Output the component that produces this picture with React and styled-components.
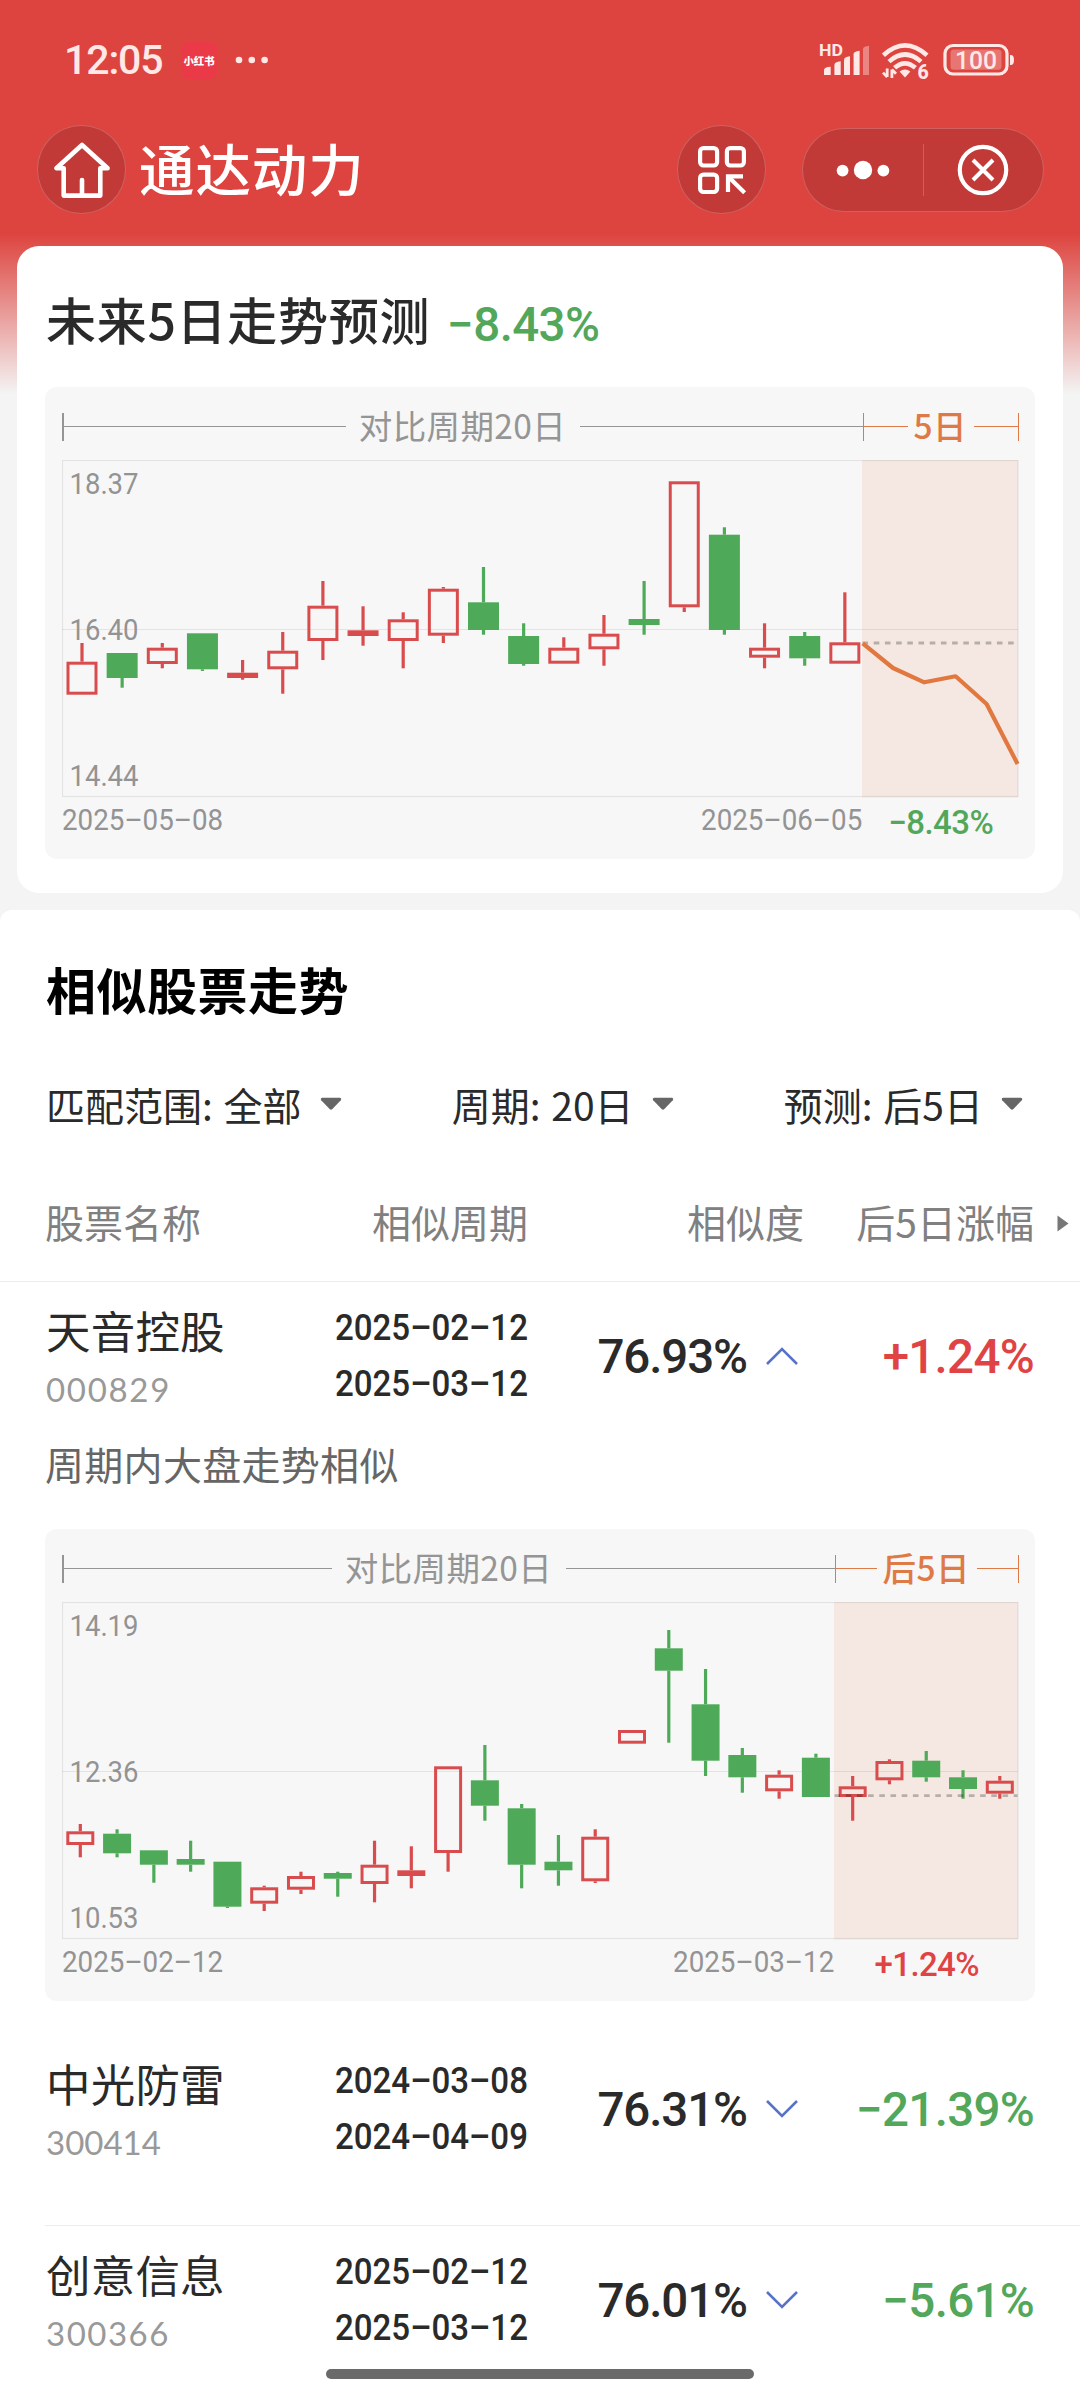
import React from 'react';
import styled, { createGlobalStyle } from 'styled-components';

const CJK = "'Noto Sans CJK SC', sans-serif";
const NUM = "Roboto, 'Noto Sans CJK SC', sans-serif";

const RED = '#e04344';
const GREEN = '#4eaa58';
const GREEN_TEXT = '#52a75b';
const ORANGE = '#de7a45';

const Global = createGlobalStyle`
  * { box-sizing: border-box; }
  html, body { margin: 0; padding: 0; }
  body { font-family: ${CJK}; background: #f4f4f4; color: #2a2a2a; }
`;

const Page = styled.div`
  position: relative;
  width: 1080px;
  height: 2400px;
  overflow: hidden;
  display: flex;
  flex-direction: column;
  background: linear-gradient(to bottom, #dd443f 0, #dd443f 234px, #f4f4f4 394px);
  & > * { flex-shrink: 0; }
`;

/* ---------- status bar ---------- */

const StatusBar = styled.header`
  height: 120px;
  padding: 0 65px 0 64px;
  display: flex;
  align-items: center;
  justify-content: space-between;
  color: #ffe8e6;
`;

const StatusGroup = styled.div`
  display: flex;
  align-items: center;
`;

const Clock = styled.span`
  font: 500 41px/60px ${NUM};
  width: 117px;
  letter-spacing: -1.1px;
`;

const AppBadge = styled.span`
  width: 36px;
  height: 37px;
  border-radius: 8px;
  background: #ea3a48;
  color: #fff;
  display: flex;
  align-items: center;
  justify-content: center;
  font: 900 10.4px/37px ${CJK};
  margin-right: 18px;
`;

/* ---------- navigation ---------- */

const NavBar = styled.nav`
  height: 99px;
  padding: 0 36px 0 37px;
  display: flex;
  align-items: center;
`;

const RoundButton = styled.button`
  width: 89px;
  height: 89px;
  padding: 0;
  border-radius: 50%;
  border: 1.5px solid rgba(255, 255, 255, 0.2);
  background: #c23a37;
  display: flex;
  align-items: center;
  justify-content: center;
`;

const NavTitle = styled.h1`
  flex: 1;
  margin: -6px 0 0 13px;
  font: 500 55.5px/80px ${CJK};
  letter-spacing: 0.9px;
  color: #fff;
`;

const Capsule = styled.div`
  width: 242px;
  height: 84px;
  margin-left: 36px;
  border-radius: 42px;
  border: 1.5px solid rgba(255, 255, 255, 0.2);
  background: #c23a37;
  display: flex;
  align-items: center;
`;

const CapsuleHalf = styled.div`
  flex: 1;
  height: 52px;
  display: flex;
  align-items: center;
  justify-content: center;
  & + & { border-left: 1.5px solid rgba(255, 255, 255, 0.2); }
`;

/* ---------- cards ---------- */

const ForecastCard = styled.section`
  margin: 27px 17px 0;
  height: 647px;
  padding: 38px 28px 0;
  border-radius: 22px;
  background: #fff;
`;

const CardHeading = styled.div`
  height: 68px;
  margin-bottom: 35px;
  display: flex;
  align-items: center;
  padding-left: 1px;
`;

const CardTitle = styled.h2`
  margin: 0;
  font: 500 50px/68px ${CJK};
  letter-spacing: 0.7px;
`;

const HeadlineChange = styled.span`
  font: 500 47.5px/60px ${NUM};
  letter-spacing: -0.6px;
  color: ${GREEN_TEXT};
  margin: 14px 0 0 17px;
`;

const MatchSection = styled.section`
  height: 1490px;
  margin-top: 17px;
  padding-top: 38px;
  border-radius: 12px 12px 0 0;
  background: #fff;
  overflow: hidden;
`;

const SectionTitle = styled.h2`
  margin: 0 0 0 46px;
  font: 700 50px/80px ${CJK};
  letter-spacing: 0.5px;
  color: #000;
`;

const FilterBar = styled.div`
  height: 152px;
  padding: 0 57px 0 46px;
  display: flex;
  align-items: center;
  justify-content: space-between;
`;

const Filter = styled.div`
  display: flex;
  align-items: center;
  font: 400 39px/56px ${CJK};
  white-space: pre;
  word-spacing: 2px;
  svg { margin-left: 18px; }
`;

/* ---------- table ---------- */

const columns = '255px 228px 276px 230px 1fr';

const TableHead = styled.div`
  height: 102px;
  padding: 0 0 19px 45px;
  border-bottom: 1px solid #ececec;
  display: grid;
  grid-template-columns: ${columns};
  align-items: center;
  font: 400 39px/56px ${CJK};
  color: #808080;
  text-align: right;
  & > :first-child { text-align: left; }
  svg { display: block; margin: 5px 0 0 23px; }
`;

const Entry = styled.article`
  margin-left: 45px;
  padding-bottom: ${(p) => (p.$open ? 34 : 42)}px;
  border-bottom: ${(p) => (p.$open ? 'none' : '1px solid #ececec')};
`;

const EntryRow = styled.div`
  height: 148px;
  display: grid;
  grid-template-columns: ${columns};
`;

const NameCell = styled.div`
  padding-top: 18px;
`;

const StockName = styled.div`
  font: 400 44.5px/60px ${CJK};
  padding-left: 1px;
  letter-spacing: 0.2px;
`;

const StockCode = styled.div`
  font: 400 33px/58px Lato, sans-serif;
  letter-spacing: ${(p) => p.$tracking}px;
  padding-left: 1px;
  color: #999;
`;

const PeriodCell = styled.div`
  padding-top: 18px;
  text-align: right;
`;

const PeriodDate = styled.div`
  font: 500 37px/56px ${NUM};
  white-space: nowrap;
  transform: scaleX(0.895);
  transform-origin: right center;
`;

const ScoreCell = styled.div`
  display: flex;
  align-items: center;
  justify-content: flex-end;
  padding-top: 2px;
  font: 500 47.5px/60px ${NUM};
  letter-spacing: -1.1px;
  svg { margin: 0 5px 0 18px; }
`;

const ChangeCell = styled.div`
  display: flex;
  align-items: center;
  justify-content: flex-end;
  padding-top: 2px;
  font: 500 47.5px/60px ${NUM};
  letter-spacing: -0.7px;
  color: ${(p) => (p.$up ? RED : GREEN_TEXT)};
`;

const Reason = styled.p`
  margin: 5px 0 38px;
  font: 400 39px/56px ${CJK};
  letter-spacing: 0.3px;
  color: #666;
`;

/* ---------- chart panel ---------- */

const Panel = styled.div`
  width: 990px;
  height: 472px;
  border-radius: 12px;
  background: #f7f7f7;
`;

const PanelHead = styled.div`
  height: 73px;
  padding: 6px 16px 0 17px;
  display: flex;
`;

const Span = styled.div`
  width: ${(p) => p.$width}px;
  display: flex;
  align-items: center;
  color: ${(p) => p.$color};
  font: ${(p) => p.$weight} 33.5px/48px ${CJK};
  letter-spacing: 0.4px;
`;

const Tick = styled.i`
  width: 1.5px;
  height: 28px;
  background: currentColor;
`;

const Rule = styled.i`
  flex: 1;
  height: 1.5px;
  background: currentColor;
`;

const SpanLabel = styled.span`
  padding: 0 ${(p) => p.$pad + 1}px 0 ${(p) => p.$pad}px;
  margin-top: -4px;
`;

const Plot = styled.svg`
  display: block;
  margin-left: 17px;
`;

const PanelFoot = styled.div`
  height: 44px;
  padding: 0 16px 0 17px;
  display: flex;
  align-items: center;
`;

const DateRange = styled.div`
  width: ${(p) => p.$width}px;
  display: flex;
  justify-content: space-between;
`;

const AxisDate = styled.span`
  font: 400 30px/40px ${NUM};
  color: #939393;
  white-space: nowrap;
  transform: scaleX(0.925);
  transform-origin: ${(p) => (p.$end ? 'right' : 'left')} center;
`;

const PanelChange = styled.span`
  flex: 1;
  padding-top: 6px;
  text-align: center;
  font: 500 33px/40px ${NUM};
  letter-spacing: -0.6px;
  color: ${(p) => (p.$up ? RED : GREEN_TEXT)};
`;

const HomeIndicator = styled.div`
  position: absolute;
  left: 326px;
  bottom: 21px;
  width: 428px;
  height: 10px;
  border-radius: 5px;
  background: #6a6a6a;
`;

/* ---------- data: [kind, high, bodyTop, bodyBottom, low] ---------- */

const forecastCandles = [
  ['r', 183, 201.7, 234.7, 234.7], ['g', 193, 193, 218, 227.7], ['r', 183, 187.7, 204, 208.3],
  ['g', 173.3, 173.3, 209.3, 211], ['r', 200, 212.7, 218, 219.7], ['r', 172, 190.7, 209.3, 233.7],
  ['r', 121, 145.7, 181, 200], ['r', 146.3, 170.3, 176, 185.7], ['r', 152.3, 159.3, 181, 208.3],
  ['r', 127, 128.7, 175.7, 183], ['g', 107, 142.3, 170, 174.7], ['g', 163.3, 176, 204, 205.7],
  ['r', 177.3, 187.7, 203.7, 203.7], ['r', 155, 173.7, 189.3, 205.7], ['g', 121, 159, 165, 174.7],
  ['r', 21.3, 21.3, 147.3, 152], ['g', 67.3, 74.7, 170, 174.7], ['r', 163.3, 187.7, 197.7, 208.3],
  ['g', 172, 176, 198.3, 205.7], ['r', 132.3, 182.3, 203.7, 203.7],
];

const matchCandles = [
  ['r', 222, 229.3, 243, 255.3], ['g', 227.3, 231.7, 251.3, 255.3], ['g', 248.3, 248.3, 262.7, 280.7],
  ['g', 238.7, 257, 262.7, 269.7], ['g', 259.7, 259.7, 304.7, 306], ['r', 283.7, 285.3, 301.7, 309],
  ['r', 269.7, 274, 287.7, 292], ['g', 269.7, 271, 276.7, 294.7], ['r', 238.7, 262.7, 282, 300.3],
  ['r', 244.3, 268.3, 274, 286.3], ['r', 164.3, 164.3, 251, 269.7], ['g', 143, 178.3, 203.7, 218.7],
  ['g', 202, 206.3, 262.7, 286.3], ['g', 233, 259.7, 268.3, 283.7], ['r', 227.3, 234.7, 279.3, 281],
  ['r', 128, 128, 141.7, 141.7], ['g', 28, 46.3, 68.7, 140.7], ['g', 67, 102.3, 158.7, 174],
  ['g', 146, 153, 175.3, 190.7], ['r', 168.3, 172.7, 189.3, 196.7], ['g', 151.7, 155.7, 195, 195],
  ['r', 174, 184.3, 195, 218.7], ['r', 157.3, 159, 178.3, 182.3], ['g', 149, 158.7, 175.3, 179.7],
  ['g', 168.3, 175.3, 187, 196.7], ['r', 174, 178.7, 191.7, 196.7],
];

const forecastChart = {
  split: 800.5, range: ['18.37', '16.40', '14.44'], dates: ['2025–05–08', '2025–06–05'],
  ahead: '5日', change: '−8.43%', up: false,
  candles: forecastCandles, first: 20, step: 40.15, body: 31, base: 183,
  line: '800.7,183.3 831,208 862.3,222.3 893.6,216.3 924.6,244 955.6,304',
};

const matchChart = {
  split: 772.5, range: ['14.19', '12.36', '10.53'], dates: ['2025–02–12', '2025–03–12'],
  ahead: '后5日', change: '+1.24%', up: true,
  candles: matchCandles, first: 18.3, step: 36.78, body: 28, base: 193.7,
};

const stocks = [
  { name: '天音控股', code: '000829', tracking: 1.7, from: '2025–02–12', to: '2025–03–12', score: '76.93%', change: '+1.24%', reason: '周期内大盘走势相似', chart: matchChart },
  { name: '中光防雷', code: '300414', tracking: 0, from: '2024–03–08', to: '2024–04–09', score: '76.31%', change: '−21.39%' },
  { name: '创意信息', code: '300366', tracking: 1.5, from: '2025–02–12', to: '2025–03–12', score: '76.01%', change: '−5.61%' },
];

/* ---------- pieces ---------- */

function Candle({ x, width, data }) {
  const [kind, high, top, bottom, low] = data;
  const hollow = kind === 'r' && bottom - top > 8;
  const color = kind === 'r' ? '#d94c4d' : GREEN;
  return (
    <g fill={color}>
      {high < top && <rect x={x - 1.6} y={high} width="3.2" height={top - high} />}
      {low > bottom && <rect x={x - 1.6} y={bottom} width="3.2" height={low - bottom} />}
      {hollow ? (
        <rect x={x - width / 2 + 1.5} y={top + 1.5} width={width - 3} height={bottom - top - 3} fill="none" stroke={color} strokeWidth="3" />
      ) : (
        <rect x={x - width / 2} y={top} width={width} height={bottom - top} />
      )}
    </g>
  );
}

function ChartPanel({ chart }) {
  const { split, range, dates, ahead, change, up, candles, first, step, body, base, line } = chart;
  return (
    <Panel>
      <PanelHead>
        <Span $width={split} $color="#959595" $weight={400}>
          <Tick /><Rule /><SpanLabel $pad={13}>对比周期20日</SpanLabel><Rule />
        </Span>
        <Span $width={957 - split} $color={ORANGE} $weight={500}>
          <Tick /><Rule /><SpanLabel $pad={6}>{ahead}</SpanLabel><Rule /><Tick />
        </Span>
      </PanelHead>
      <Plot width="958" height="338" viewBox="0 0 958 338">
        <rect x={split - 0.5} y="0" width={956.5 - split} height="337.5" fill="#f5e8e2" />
        <g stroke="#000" strokeOpacity="0.08" strokeWidth="1.2" fill="none">
          <rect x="0.5" y="0.5" width="955.5" height="336" />
          <path d="M0 169.5H956" />
        </g>
        <g fill="#939393" fontFamily={NUM} fontSize="30">
          {range.map((t, i) => (
            <text key={t} x="7.5" y={[33.7, 180, 326.3][i]} textLength="69" lengthAdjust="spacingAndGlyphs">{t}</text>
          ))}
        </g>
        {candles.map((c, i) => <Candle key={i} x={first + i * step} width={body} data={c} />)}
        <path d={`M${split} ${base}H955.5`} stroke="#000" strokeOpacity="0.25" strokeWidth="2.8" strokeDasharray="5.6 5.6" />
        {line && <polyline points={line} fill="none" stroke="#e07840" strokeWidth="4.2" strokeLinejoin="round" />}
      </Plot>
      <PanelFoot>
        <DateRange $width={split}>
          <AxisDate>{dates[0]}</AxisDate>
          <AxisDate $end>{dates[1]}</AxisDate>
        </DateRange>
        <PanelChange $up={up}>{change}</PanelChange>
      </PanelFoot>
    </Panel>
  );
}

const Caret = () => (
  <svg width="22" height="14" viewBox="0 0 22 14"><path d="M2 .8H20Q22 1.4 20.8 3.2L12.4 12Q11 13.4 9.6 12L1.2 3.2Q0 1.4 2 .8Z" fill="#666" /></svg>
);

const Chevron = ({ up }) => (
  <svg width="34" height="20" viewBox="0 0 34 20">
    <path d={up ? 'M2 17L17 2L32 17' : 'M2 1L17 16L32 1'} fill="none" stroke="#5872c8" strokeWidth="2.6" />
  </svg>
);

const HomeIcon = () => (
  <svg width="60" height="60" viewBox="0 0 60 60" fill="none" stroke="#fff" strokeWidth="4.6" strokeLinecap="round" strokeLinejoin="round">
    <path d="M30 5L4.4 28.2H11.7V55.6H48.3V28.2H55.6Z" />
    <path d="M30 40V55" />
  </svg>
);

const ScanIcon = () => (
  <svg width="50" height="50" viewBox="0 0 50 50" fill="none" stroke="#fff" strokeWidth="4.2">
    <rect x="3.1" y="3.1" width="17" height="17.4" rx="3.4" />
    <rect x="29.9" y="3.1" width="17" height="17.4" rx="3.4" />
    <rect x="3.1" y="29.6" width="17" height="17.4" rx="3.4" />
    <path d="M46 31.3H31V47" />
    <path d="M31.4 31.8L47.6 47.8" />
  </svg>
);

const SignalIcon = () => (
  <svg width="196" height="60" viewBox="0 -10 196 60" fill="#ffe8e6">
    <text x="0" y="16.4" fontFamily={NUM} fontWeight="700" fontSize="17" textLength="24" lengthAdjust="spacingAndGlyphs">HD</text>
    <path d="M5 35V30Q5 27 11.7 26.7V35Z" />
    <path d="M15.4 35V25Q15.4 22 21.7 21.3V35Z" />
    <path d="M25 35V20Q25 17 31 16.3V35Z" />
    <path d="M34.6 35V14Q34.6 11.4 40.6 10.7V35Z" />
    <path d="M44 35V9Q44 6.4 50 5.7V35Z" opacity="0.4" />
    <g fill="none" stroke="#ffe8e6" strokeWidth="4.6">
      <path d="M64.4 15.2Q86 -4.6 108 15.2" />
      <path d="M70 21.6Q86 7.4 102 21.6" />
      <path d="M75.6 27.8Q86 18.8 96.4 27.8" />
    </g>
    <path d="M86 37.4L80.6 31.6Q86 27.4 91.4 31.6Z" />
    <path d="M68.2 28.4V37M72.9 38V29.4M68.2 37L64 32.6M72.9 29.6L77 33.8" stroke="#ffe8e6" strokeWidth="2.8" fill="none" />
    <text x="98.6" y="38.6" fontFamily={NUM} fontWeight="800" fontSize="19.5">6</text>
    <rect x="126" y="5.5" width="62" height="28.5" rx="8" fill="none" stroke="#ffe8e6" strokeWidth="3.2" />
    <rect x="131.5" y="9.4" width="51" height="20.4" rx="3.5" opacity="0.3" />
    <text x="136" y="29" fontFamily={NUM} fontWeight="500" fontSize="26.5" textLength="42" lengthAdjust="spacingAndGlyphs">100</text>
    <path d="M191 15H192.4Q195 15.6 195 20T192.4 25H191Z" />
  </svg>
);

function StockEntry({ stock }) {
  const up = stock.change.startsWith('+');
  return (
    <Entry $open={Boolean(stock.chart)}>
      <EntryRow>
        <NameCell>
          <StockName>{stock.name}</StockName>
          <StockCode $tracking={stock.tracking}>{stock.code}</StockCode>
        </NameCell>
        <PeriodCell>
          <PeriodDate>{stock.from}</PeriodDate>
          <PeriodDate>{stock.to}</PeriodDate>
        </PeriodCell>
        <ScoreCell>{stock.score}<Chevron up={Boolean(stock.chart)} /></ScoreCell>
        <ChangeCell $up={up}>{stock.change}</ChangeCell>
      </EntryRow>
      {stock.reason && <Reason>{stock.reason}</Reason>}
      {stock.chart && <ChartPanel chart={stock.chart} />}
    </Entry>
  );
}

export default function App() {
  return (
    <Page>
      <Global />
      <StatusBar>
        <StatusGroup>
          <Clock>12:05</Clock>
          <AppBadge>小红书</AppBadge>
          <svg width="34" height="8" viewBox="0 0 34 8" fill="#ffe8e6">
            <circle cx="4" cy="4" r="3.3" /><circle cx="16.8" cy="4" r="3.3" /><circle cx="29.6" cy="4" r="3.3" />
          </svg>
        </StatusGroup>
        <SignalIcon />
      </StatusBar>
      <NavBar>
        <RoundButton aria-label="首页"><HomeIcon /></RoundButton>
        <NavTitle>通达动力</NavTitle>
        <RoundButton aria-label="扫码"><ScanIcon /></RoundButton>
        <Capsule>
          <CapsuleHalf>
            <svg width="54" height="20" viewBox="0 0 54 20" fill="#fff">
              <circle cx="6.6" cy="10.6" r="5.9" /><circle cx="27" cy="10" r="9.2" /><circle cx="47.4" cy="10.6" r="5.9" />
            </svg>
          </CapsuleHalf>
          <CapsuleHalf>
            <svg width="52" height="52" viewBox="0 0 52 52" fill="none" stroke="#fff">
              <circle cx="26" cy="26" r="23.2" strokeWidth="4.2" />
              <path d="M16 16L36 36M36 16L16 36" strokeWidth="4" />
            </svg>
          </CapsuleHalf>
        </Capsule>
      </NavBar>

      <ForecastCard>
        <CardHeading>
          <CardTitle>未来5日走势预测</CardTitle>
          <HeadlineChange>−8.43%</HeadlineChange>
        </CardHeading>
        <ChartPanel chart={forecastChart} />
      </ForecastCard>

      <MatchSection>
        <SectionTitle>相似股票走势</SectionTitle>
        <FilterBar>
          <Filter>匹配范围: 全部<Caret /></Filter>
          <Filter>周期: 20日<Caret /></Filter>
          <Filter>预测: 后5日<Caret /></Filter>
        </FilterBar>
        <TableHead>
          <span>股票名称</span>
          <span>相似周期</span>
          <span>相似度</span>
          <span>后5日涨幅</span>
          <svg width="12" height="17" viewBox="0 0 12 17"><path d="M.5 .5L11.5 8.5L.5 16.5Z" fill="#777" /></svg>
        </TableHead>
        {stocks.map((s) => <StockEntry key={s.code} stock={s} />)}
      </MatchSection>
      <HomeIndicator />
    </Page>
  );
}
